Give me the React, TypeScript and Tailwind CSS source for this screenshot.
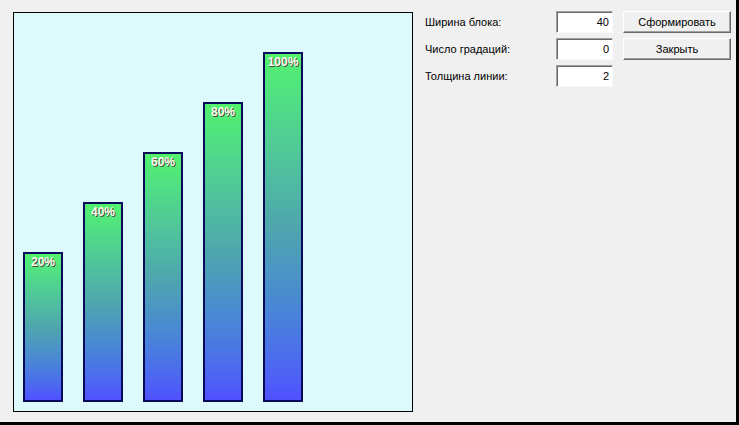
import React from 'react';

const bars = [
  { label: '20%', height: 150 },
  { label: '40%', height: 200 },
  { label: '60%', height: 250 },
  { label: '80%', height: 300 },
  { label: '100%', height: 350 },
];

const fields = [
  { label: 'Ширина блока:', value: '40', button: 'Сформировать' },
  { label: 'Число градаций:', value: '0', button: 'Закрыть' },
  { label: 'Толщина линии:', value: '2', button: null },
];

const Chart: React.FC = () => (
  <div className="w-[400px] h-[400px] shrink-0 border border-black bg-[#dcfafc] flex items-end gap-[20px] pl-[9px] pb-[9px] box-border">
    {bars.map((bar) => (
      <div
        key={bar.label}
        className="w-[40px] border-2 border-[#0a0a5a] box-border bg-gradient-to-b from-[#52f26c] via-[#4fa6ad] to-[#5050ff] flex justify-center"
        style={{ height: bar.height }}
      >
        <span className="text-[12px] leading-[14px] font-bold text-[#fdfde8] pt-[1px] [text-shadow:1px_1px_0_#4a4a4a]">
          {bar.label}
        </span>
      </div>
    ))}
  </div>
);

export default function App() {
  return (
    <div
      className="w-[739px] h-[425px] bg-[#f0f0f0] border-r-[3px] border-b-[3px] border-black box-border flex items-start pl-[13px] pt-[12px] gap-[12px]"
      style={{ fontFamily: '"Liberation Sans", Arial, sans-serif' }}
    >
      <Chart />
      <div className="grid grid-cols-[121px_57px_108px] gap-x-[10px] gap-y-[5px] -mt-[1px] items-center text-[11px] text-black">
        {fields.map((f) => (
          <React.Fragment key={f.label}>
            <div className="h-[22px] flex items-center">{f.label}</div>
            <div className="h-[22px] bg-white border border-t-[#a0a0a0] border-l-[#a0a0a0] border-b-[#f8f8f8] border-r-[#f8f8f8] box-border flex items-center justify-end pr-[3px] shadow-[inset_1px_1px_0_#696969]">
              {f.value}
            </div>
            {f.button ? (
              <button className="h-[22px] bg-[#f0f0f0] border border-t-white border-l-white border-b-[#696969] border-r-[#696969] box-border shadow-[inset_-1px_-1px_0_#a0a0a0] flex items-center justify-center">
                {f.button}
              </button>
            ) : (
              <div />
            )}
          </React.Fragment>
        ))}
      </div>
    </div>
  );
}
